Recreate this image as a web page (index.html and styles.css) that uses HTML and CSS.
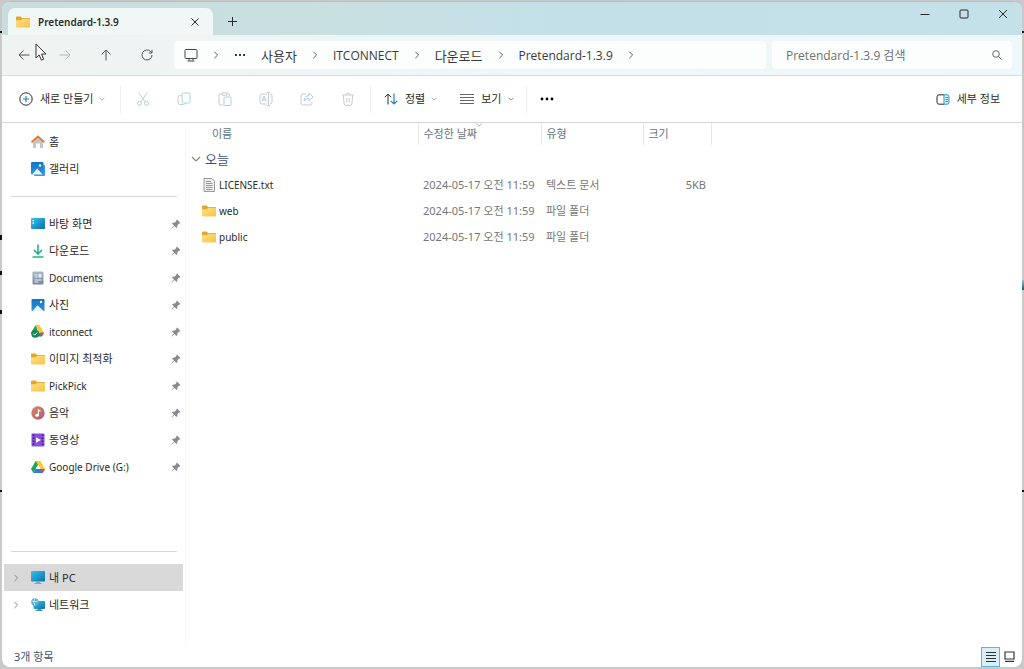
FILE: index.html
```html
<!DOCTYPE html>
<html lang="ko">
<head>
<meta charset="utf-8">
<meta name="viewport" content="width=device-width, initial-scale=1">
<title>Pretendard-1.3.9</title>
<link rel="stylesheet" href="styles.css">
</head>
<body class="desktop">
<svg class="defs" width="0" height="0" aria-hidden="true">
  <defs>
    <linearGradient id="gFolder" x1="0" y1="0" x2="1" y2="1"><stop offset="0" stop-color="#ffe08a"/><stop offset="1" stop-color="#f7c443"/></linearGradient>
    <linearGradient id="gBlue" x1="0" y1="0" x2="1" y2="1"><stop offset="0" stop-color="#37c4e8"/><stop offset="1" stop-color="#0a6fae"/></linearGradient>
    <linearGradient id="gPhoto" x1="0" y1="0" x2="0" y2="1"><stop offset="0" stop-color="#1273c6"/><stop offset="1" stop-color="#2e93dd"/></linearGradient>
    <linearGradient id="gDoc" x1="0" y1="0" x2="0" y2="1"><stop offset="0" stop-color="#a9bacb"/><stop offset="1" stop-color="#71879f"/></linearGradient>
    <linearGradient id="gMusic" x1="0" y1="0" x2="1" y2="1"><stop offset="0" stop-color="#e08460"/><stop offset="1" stop-color="#a9607f"/></linearGradient>
    <symbol id="folder" viewBox="0 0 14 12"><path d="M0 1.5Q0 .5 1 .5h3.6l1.5 1.6H13q1 0 1 1V6H0z" fill="#e2a62c"/><path d="M0 4.2h4.8l1.4-1.4H13q1 0 1 1v6.8q0 1-1 1H1q-1 0-1-1z" fill="url(#gFolder)"/></symbol>
    <symbol id="chev" viewBox="0 0 6 10"><path d="M1 1l4 4-4 4" fill="none" stroke="currentColor" stroke-width="1.2"/></symbol>
    <symbol id="down" viewBox="0 0 10 6"><path d="M1 1l4 4 4-4" fill="none" stroke="currentColor" stroke-width="1.2"/></symbol>
    <symbol id="pin" viewBox="0 0 10 10"><path d="M6 .6L9.400 4l-.8.7-.6-.1-1.600 1.700-.1 2-.8.7-2-2L.8 9.600l-.5-.4L3 6.400l-2-2 .8-.7 2-.1L5.400 2l-.1-.7z" fill="#858b91"/></symbol>
    <symbol id="drive" viewBox="0 0 14 12"><path d="M4.700 0h4.600L4.700 8 2.400 12 0 8z" fill="#1ea362"/><path d="M4.700 0h4.600L14 8H9.300z" fill="#ffc928"/><path d="M4.700 8H14l-2.400 4H2.400z" fill="#3478e5"/><path d="M9.300 8H14l-2.400 4z" fill="#e84436"/><path d="M7 4l2.400 4H4.700z" fill="#fff"/></symbol>
  </defs>
</svg>

<i class="speck speck-l speck-1"></i><i class="speck speck-l speck-2"></i><i class="speck speck-l speck-3"></i><i class="speck speck-l speck-4"></i><i class="speck speck-l speck-5"></i>
<i class="speck speck-r speck-1"></i><i class="speck speck-r speck-5"></i><i class="speck speck-r speck-teal"></i>

<div class="window">
  <header class="titlebar">
    <div class="tab">
      <svg width="14" height="12"><use href="#folder"/></svg>
      <span class="tab-title">Pretendard-1.3.9</span>
      <button class="icon-btn" aria-label="탭 닫기"><svg width="8" height="8" viewBox="0 0 8 8"><path d="M.5.5l7 7m0-7l-7 7" class="ln"/></svg></button>
    </div>
    <button class="icon-btn new-tab" aria-label="새 탭"><svg width="9" height="9" viewBox="0 0 9 9"><path d="M4.500 0v9M0 4.500h9" class="ln"/></svg></button>
    <div class="win-controls">
      <button class="icon-btn" aria-label="최소화"><svg width="10" height="10" viewBox="0 0 10 10"><path d="M.5 5.500h9" class="ln"/></svg></button>
      <button class="icon-btn" aria-label="최대화"><svg width="10" height="10" viewBox="0 0 10 10"><rect x="1" y="1" width="8" height="8" rx="1" class="ln"/></svg></button>
      <button class="icon-btn" aria-label="닫기"><svg width="10" height="10" viewBox="0 0 10 10"><path d="M1 1l8 8m0-8l-8 8" class="ln"/></svg></button>
    </div>
  </header>

  <nav class="navbar" aria-label="탐색">
    <div class="nav-buttons">
      <button class="icon-btn" aria-label="뒤로"><svg width="12" height="12" viewBox="0 0 12 12"><path d="M11.500 6H1m4.500-4.500L1 6l4.500 4.500" class="ln"/></svg></button>
      <button class="icon-btn faded" aria-label="앞으로"><svg width="12" height="12" viewBox="0 0 12 12"><path d="M.5 6H11M6.500 1.500L11 6l-4.500 4.500" class="ln"/></svg></button>
      <button class="icon-btn" aria-label="위로"><svg width="12" height="12" viewBox="0 0 12 12"><path d="M6 11.500V1M1.500 5.500L6 1l4.500 4.500" class="ln"/></svg></button>
      <button class="icon-btn" aria-label="새로 고침"><svg width="12" height="12" viewBox="0 0 12 12"><path d="M11 6a5 5 0 1 1-1.500-3.600L11 4M11 .8V4H7.800" class="ln"/></svg></button>
    </div>
    <div class="address">
      <svg class="pc-line" width="14" height="14" viewBox="0 0 14 14"><path d="M2 1.500h10q1 0 1 1v7q0 1-1 1H2q-1 0-1-1v-7q0-1 1-1zM5 10.500v2m4-2v2M3.500 13h7" class="ln"/></svg>
      <svg class="sep" width="6" height="10"><use href="#chev"/></svg>
      <button class="icon-btn dots" aria-label="이전 폴더"><svg width="10" height="2" viewBox="0 0 10 2"><path d="M0 0h2v2H0zm4 0h2v2H4zm4 0h2v2H8z" fill="currentColor"/></svg></button>
      <a href="#">사용자</a>
      <svg class="sep" width="6" height="10"><use href="#chev"/></svg>
      <a class="latin" href="#">ITCONNECT</a>
      <svg class="sep" width="6" height="10"><use href="#chev"/></svg>
      <a href="#">다운로드</a>
      <svg class="sep" width="6" height="10"><use href="#chev"/></svg>
      <a class="latin" href="#">Pretendard-1.3.9</a>
      <svg class="sep" width="6" height="10"><use href="#chev"/></svg>
    </div>
    <label class="search">
      <input type="text" placeholder="Pretendard-1.3.9 검색" aria-label="Pretendard-1.3.9 검색">
      <svg width="10" height="10" viewBox="0 0 10 10"><circle cx="4" cy="4" r="3.300" class="ln"/><path d="M6.400 6.400L9.700 9.700" class="ln"/></svg>
    </label>
  </nav>

  <div class="toolbar">
    <button class="tool create"><svg width="14" height="14" viewBox="0 0 14 14"><circle cx="7" cy="7" r="6.200" class="ln"/><path d="M7 4v6M4 7h6" fill="none" stroke="#1b85c4" stroke-width="1.200"/></svg><span>새로 만들기</span><svg class="drop" width="6" height="4"><use href="#down"/></svg></button>
    <div class="edit-tools">
      <button class="icon-btn" aria-label="잘라내기"><svg width="14" height="14" viewBox="0 0 14 14"><path d="M2.500.5l6.700 9.200M11.500.5L4.800 9.700" class="ln-g"/><circle cx="3.500" cy="11.300" r="2" class="ln-b"/><circle cx="10.500" cy="11.300" r="2" class="ln-b"/></svg></button>
      <button class="icon-btn" aria-label="복사"><svg width="14" height="14" viewBox="0 0 14 14"><path d="M4.500 3.500H3q-2 0-2 2v5q0 2 2 2h3.500q1.500 0 2-1.500" class="ln-g"/><rect x="5" y="1" width="8" height="10" rx="1.500" class="ln-b"/></svg></button>
      <button class="icon-btn" aria-label="붙여넣기"><svg width="14" height="14" viewBox="0 0 14 14"><path d="M5.500 13H2q-1 0-1-1V3q0-1 1-1h2m5 0h1.500q1 0 1 1v1M4 .8h5v2.400H4z" class="ln-g"/><rect x="6" y="5" width="7" height="8.500" rx="1" class="ln-b"/></svg></button>
      <button class="icon-btn" aria-label="이름 바꾸기"><svg width="14" height="14" viewBox="0 0 14 14"><path d="M8 2H3Q1 2 1 4v6q0 2 2 2h5m3-10q2 0 2 2v6q0 2-2 2M9.500.5v13m-1.500-13h3m-3 13h3" class="ln-g"/><path d="M3 9.500L5.200 4l2.200 5.500M3.800 7.800h2.800" class="ln-b"/></svg></button>
      <button class="icon-btn" aria-label="공유"><svg width="14" height="14" viewBox="0 0 14 14"><path d="M6 2H3Q1 2 1 4v7q0 2 2 2h7q2 0 2-2v-1" class="ln-g"/><path d="M9 1l4 4-4 3.700V6.500Q6 6.400 4 9q.4-5 5-5.500z" class="ln-b"/></svg></button>
      <button class="icon-btn" aria-label="삭제"><svg width="14" height="14" viewBox="0 0 14 14"><path d="M1 3h12M5 3q0-2 2-2t2 2M2.200 3l1 9q.1 1.300 1.300 1.300h5q1.200 0 1.300-1.300l1-9M5.800 6v4.500M8.200 6v4.500" class="ln-g"/></svg></button>
    </div>
    <button class="tool sort"><svg width="14" height="12" viewBox="0 0 14 12"><path d="M4 11.500V1M.8 4.200L4 1l3.200 3.200" class="ln"/><path d="M10 .5V11M6.800 7.800L10 11l3.200-3.200" fill="none" stroke="#1b85c4" stroke-width="1.200"/></svg><span>정렬</span><svg class="drop" width="6" height="4"><use href="#down"/></svg></button>
    <button class="tool view"><svg width="14" height="10" viewBox="0 0 14 10"><path d="M0 .5h14M0 3.500h14M0 6.500h14M0 9.500h14" class="ln"/></svg><span>보기</span><svg class="drop" width="6" height="4"><use href="#down"/></svg></button>
    <button class="tool more" aria-label="더 보기"><svg width="14" height="4" viewBox="0 0 14 4"><circle cx="2" cy="2" r="1.400"/><circle cx="7" cy="2" r="1.400"/><circle cx="12" cy="2" r="1.400"/></svg></button>
    <button class="tool details"><svg width="14" height="11" viewBox="0 0 14 11"><path d="M8 .8H3q-2 0-2 2v5.400q0 2 2 2h5" class="ln"/><path d="M8 .8h3q2 0 2 2v5.400q0 2-2 2H8zM9.500 3.500H12m-2.500 2H12m-2.500 2H12" fill="#dff3fd" stroke="#1b95d0"/></svg><span>세부 정보</span></button>
  </div>

  <div class="body">
    <aside class="sidebar">
      <ul class="group top">
        <li><a class="item" href="#"><svg width="14" height="14" viewBox="0 0 14 14"><path d="M2 6.500L7 2l5 4.500V13H9V8.500H5V13H2z" fill="#c3c5c7"/><path d="M.6 7.300L7 1.500l6.400 5.800" fill="none" stroke="#d98236" stroke-width="1.900"/></svg><span>홈</span></a></li>
        <li><a class="item" href="#"><svg width="14" height="14" viewBox="0 0 14 14"><path d="M3 3h10q1 0 1 1v9q0 1-1 1H4q-1 0-1-1z" fill="#3a9ae0"/><rect width="12.500" height="12.500" rx="1.200" fill="url(#gPhoto)"/><path d="M1 12.500l5.200-6 5.400 6z" fill="#e7f5ff"/><circle cx="9" cy="3.500" r="1.200" fill="#fff"/></svg><span>갤러리</span></a></li>
      </ul>
      <ul class="group pinned">
        <li><a class="item" href="#"><svg width="14" height="11" viewBox="0 0 14 11"><rect width="14" height="11" rx="1" fill="url(#gBlue)"/><path d="M1.500 2h1.500v1.200H1.500zm0 2.500h1.500v1.200H1.500z" fill="#fff"/></svg><span>바탕 화면</span><svg class="pin" width="10" height="10"><use href="#pin"/></svg></a></li>
        <li><a class="item" href="#"><svg width="14" height="14" viewBox="0 0 14 14"><path d="M7 .5v9M3 6l4 4 4-4M1.500 13h11" fill="none" stroke="#27b08c" stroke-width="1.600"/></svg><span>다운로드</span><svg class="pin" width="10" height="10"><use href="#pin"/></svg></a></li>
        <li><a class="item" href="#"><svg width="14" height="14" viewBox="0 0 14 14"><rect x="1.500" y=".5" width="11" height="13" rx="1" fill="url(#gDoc)"/><path d="M3.500 4h3m-3 2h3m-3 3h7M3.500 11h4" stroke="#e6edf4"/><path d="M7.500 3h3v3.500h-3z" fill="#e6edf4"/></svg><span class="latin">Documents</span><svg class="pin" width="10" height="10"><use href="#pin"/></svg></a></li>
        <li><a class="item" href="#"><svg width="14" height="12" viewBox="0 0 14 12"><rect x=".5" width="13" height="12" rx="1" fill="url(#gPhoto)"/><path d="M1.500 12l5-5.800 6 5.800z" fill="#e7f5ff"/><circle cx="10" cy="3" r="1.200" fill="#fff"/></svg><span>사진</span><svg class="pin" width="10" height="10"><use href="#pin"/></svg></a></li>
        <li><a class="item" href="#"><svg width="14" height="13" viewBox="0 0 14 13"><use href="#drive" width="13" height="12"/><circle cx="4.300" cy="8.700" r="4" fill="#16884f"/><path d="M2.300 8.700l1.400 1.500 2.600-2.800" fill="none" stroke="#fff"/></svg><span class="latin">itconnect</span><svg class="pin" width="10" height="10"><use href="#pin"/></svg></a></li>
        <li><a class="item" href="#"><svg width="14" height="12"><use href="#folder"/></svg><span>이미지 최적화</span><svg class="pin" width="10" height="10"><use href="#pin"/></svg></a></li>
        <li><a class="item" href="#"><svg width="14" height="12"><use href="#folder"/></svg><span class="latin">PickPick</span><svg class="pin" width="10" height="10"><use href="#pin"/></svg></a></li>
        <li><a class="item" href="#"><svg width="14" height="14" viewBox="0 0 14 14"><circle cx="7" cy="7" r="6.700" fill="url(#gMusic)"/><ellipse cx="6" cy="9.300" rx="1.800" ry="1.500" fill="#fff"/><path d="M7.300 9.300V3.500q.5 1.300 2.300 1.500" fill="none" stroke="#fff" stroke-width="1.100"/></svg><span>음악</span><svg class="pin" width="10" height="10"><use href="#pin"/></svg></a></li>
        <li><a class="item" href="#"><svg width="14" height="14" viewBox="0 0 14 14"><rect x=".5" y=".5" width="13" height="13" rx="1" fill="#8a4fd8"/><path d="M2.500 1.500v11m9-11v11" stroke="#40208a" stroke-width="1.600" stroke-dasharray="1.600 1.400"/><path d="M5 4.300l4.800 2.700L5 9.700z" fill="#fff"/></svg><span>동영상</span><svg class="pin" width="10" height="10"><use href="#pin"/></svg></a></li>
        <li><a class="item" href="#"><svg width="14" height="12"><use href="#drive"/></svg><span class="latin">Google Drive (G:)</span><svg class="pin" width="10" height="10"><use href="#pin"/></svg></a></li>
      </ul>
      <ul class="group tree">
        <li><a class="item selected" href="#"><svg class="expand" width="6" height="10"><use href="#chev"/></svg><svg width="14" height="13" viewBox="0 0 14 13"><rect width="14" height="10.500" rx="1" fill="url(#gBlue)"/><path d="M5 10.500h4v1.500H5zM3.500 12h7v1h-7z" fill="#88a3b1"/></svg><span>내 PC</span></a></li>
        <li><a class="item" href="#"><svg class="expand" width="6" height="10"><use href="#chev"/></svg><svg width="14" height="13" viewBox="0 0 14 13"><rect x="2.500" y="3" width="11.500" height="8" rx="1" fill="url(#gBlue)"/><path d="M6.500 11h3.500v1.200H6.500zM4.500 12h7v1h-7z" fill="#4b8fad"/><circle cx="4" cy="4" r="3.800" fill="#5aaed6"/><path d="M1 3q3 1.500 6 0M4 .2q-2.500 4 0 7.500" fill="none" stroke="#d7eefa" stroke-width=".8"/></svg><span>네트워크</span></a></li>
      </ul>
    </aside>

    <main class="files">
      <table class="file-table">
        <colgroup><col class="col-name"><col class="col-date"><col class="col-type"><col class="col-size"></colgroup>
        <thead><tr><th class="name-head">이름</th><th class="sorted">수정한 날짜<svg class="sort-mark" width="6" height="4"><use href="#down"/></svg></th><th>유형</th><th>크기</th></tr></thead>
        <tbody>
          <tr class="group-row"><th colspan="4"><button class="group-btn"><svg width="10" height="6"><use href="#down"/></svg>오늘</button></th></tr>
          <tr><td><a class="file" href="#"><svg width="14" height="14" viewBox="0 0 14 14"><path d="M2 .5h8l2.500 2.500v10.500H2z" fill="#eceded" stroke="#9a9a9a"/><path d="M4 3.500h5M4 5.500h6.500M4 7.500h6.500M4 9.500h6.500M4 11.500h6.500" stroke="#9a9a9a"/></svg><span class="latin">LICENSE.txt</span></a></td><td>2024-05-17 오전 11:59</td><td>텍스트 문서</td><td class="num">5KB</td></tr>
          <tr><td><a class="file" href="#"><svg width="14" height="12"><use href="#folder"/></svg><span class="latin">web</span></a></td><td>2024-05-17 오전 11:59</td><td>파일 폴더</td><td></td></tr>
          <tr><td><a class="file" href="#"><svg width="14" height="12"><use href="#folder"/></svg><span class="latin">public</span></a></td><td>2024-05-17 오전 11:59</td><td>파일 폴더</td><td></td></tr>
        </tbody>
      </table>
    </main>
  </div>

  <footer class="status">
    <span>3개 항목</span>
    <div class="view-modes">
      <button class="icon-btn active" aria-label="자세히"><svg width="10" height="10" viewBox="0 0 10 10"><path d="M0 .5h10M0 3.500h10M0 6.500h10M0 9.500h10" stroke="#333"/></svg></button>
      <button class="icon-btn" aria-label="큰 아이콘"><svg width="11" height="11" viewBox="0 0 11 11"><path d="M1 1h9v7H1zM1 10.300h9" fill="none" stroke="#333" stroke-width="1.200"/></svg></button>
    </div>
  </footer>
</div>

<svg class="pointer" width="12" height="19" viewBox="0 0 12 19" aria-hidden="true"><path d="M1 1v14l3.200-3 2.200 5.200 2.300-1L6.500 11H11z" fill="#fff" stroke="#333"/></svg>
</body>
</html>
```
FILE: styles.css
```css
* { box-sizing: border-box; }

body {
  margin: 0;
  font-family: "Noto Sans", "Noto Sans CJK KR", sans-serif;
  font-size: 11px;
  line-height: 16px;
  color: #2b2b2b;
}

button, input { font: inherit; color: inherit; }
button { background: none; border: 0; padding: 0; }
a { color: inherit; text-decoration: none; }
ul { list-style: none; margin: 0; padding: 0; }
svg { display: block; flex: none; }

.defs { position: absolute; }

.desktop {
  min-height: 100vh;
  padding: 1px 2px 2px;
  background: #c9c9c9;
  display: flex;
}

.window {
  flex: 1;
  min-width: 0;
  display: flex;
  flex-direction: column;
  background: #fff;
  border-top: 1px solid #b5bfc1;
  border-radius: 8px;
  overflow: hidden;
}

.ln { fill: none; stroke: currentColor; stroke-width: 1; }
.ln-g { fill: none; stroke: #c6cccf; }
.ln-b { fill: none; stroke: #a9d0e3; }

.icon-btn { display: flex; align-items: center; justify-content: center; }

/* Title bar */
.titlebar {
  display: flex;
  height: 33px;
  background: linear-gradient(90deg, #c8dedd, #cae0e0 30%, #c3e0e9 55%, #c4e0e9);
}

.tab {
  display: flex;
  align-items: center;
  width: 205px;
  margin: 6px 0 0 6px;
  padding: 0 14px 0 8px;
  background: #f1f7f6;
  border-radius: 7px 7px 0 0;
}
.tab-title { margin-left: 8px; font-weight: 600; font-size: 10px; }
.tab .icon-btn { margin-left: auto; }
.new-tab { width: 39px; padding-top: 6px; }
.win-controls { display: flex; margin-left: auto; height: 24px; }
.win-controls .icon-btn { width: 39px; }

/* Navigation */
.navbar {
  display: flex;
  align-items: center;
  height: 41px;
  padding-right: 10px;
  background: linear-gradient(90deg, #eff3f2, #eef6f7 50%, #eef7fa);
  border-bottom: 1px solid #d6dddf;
}
.nav-buttons { display: flex; gap: 29px; padding: 0 21px 0 16px; color: #555; }
.nav-buttons .icon-btn { width: 12px; }
.nav-buttons .faded { color: #b5b9ba; }

.address, .search {
  display: flex;
  align-items: center;
  height: 28px;
  background: #fcfefe;
  border-radius: 4px;
  font-family: "Open Sans", "Noto Sans CJK KR", sans-serif;
}
.address { flex: 1; min-width: 0; padding-left: 10px; font-size: 13px; white-space: nowrap; color: #3a3a3a; }
.address a { padding-top: 1px; }
.address .latin { font-size: 12px; }
.address .sep { width: 6px; height: 8px; margin: 0 15px; color: #555; }
.address .pc-line { color: #444; }
.address .dots { margin: 0 16px 0 1px; }
.search { width: 240px; margin-left: 6px; padding: 0 10px 0 14px; font-size: 12px; color: #666; }
.search input { flex: 1; min-width: 0; padding: 1px 0 0; border: 0; outline: 0; background: none; }
.search input::placeholder { color: #707070; opacity: 1; }

/* Command bar */
.toolbar {
  display: flex;
  align-items: center;
  height: 47px;
  border-bottom: 1px solid #cfd8d8;
}
.tool { display: flex; align-items: center; height: 28px; white-space: nowrap; }
.tool span { margin-left: 7px; }
.drop { margin-left: 6px; color: #888; }
.create { width: 119px; padding-left: 17px; border-right: 1px solid #edf0f0; }
.edit-tools { display: flex; gap: 27px; align-items: center; height: 28px; padding: 0 15px; border-right: 1px solid #edf0f0; }
.sort { padding-left: 13px; }
.view { padding: 0 12px 0 23px; border-right: 1px solid #edf0f0; }
.view svg { color: #666; }
.more { padding-left: 13px; }
.details { margin-left: auto; padding-right: 22px; }

/* Content */
.body { flex: 1; display: flex; }

.sidebar {
  display: flex;
  flex-direction: column;
  width: 184px;
  padding: 5px 0 28px;
  border-right: 1px solid #f6f8f8;
}
.item {
  display: flex;
  align-items: center;
  gap: 4px;
  height: 27px;
  margin: 0 2px;
  padding: 0 2px 0 27px;
  white-space: nowrap;
}
.item .latin, .file .latin { font-size: 10px; }
.item .pin { margin: 0 0 0 auto; }
.group.pinned, .group.tree { position: relative; padding-top: 14px; }
.group.pinned { margin-top: 14px; }
.group.tree { margin-top: auto; padding-top: 13px; }
.group.pinned::before, .group.tree::before {
  content: "";
  position: absolute;
  top: 0;
  left: 9px;
  right: 8px;
  border-top: 1px solid #d6d6d6;
}
.tree .item { padding-left: 9px; }
.tree .expand { margin-right: 8px; width: 6px; height: 8px; color: #888; }
.selected { background: #d9d9d9; }

.file-table {
  table-layout: fixed;
  width: 525px;
  border-collapse: collapse;
  color: #777;
  white-space: nowrap;
}
.col-name { width: 232px; }
.col-date { width: 123px; }
.col-type { width: 102px; }
.col-size { width: 68px; }
.file-table th, .file-table td { height: 26px; padding: 0 0 0 5px; text-align: left; font-weight: 400; }
.file-table thead th { position: relative; height: 22px; padding-left: 5px; color: #65727e; border-right: 1px solid #e3e8e8; }
.file-table thead .name-head { padding-left: 26px; }
.sort-mark { position: absolute; top: 0; left: 47%; color: #888; }
.file-table .group-row th { height: 27px; padding: 0 0 0 5px; }
.group-btn { display: flex; align-items: center; gap: 4px; font-size: 13px; color: #3f4f83; }
.group-btn svg { color: #888; }
.file-table .num { padding: 0 5px 0 0; text-align: right; }
.file {
  display: flex;
  align-items: center;
  gap: 3px;
  padding-left: 11px;
  color: #2b2b2b;
}

/* Status bar */
.status {
  display: flex;
  align-items: center;
  justify-content: space-between;
  height: 21px;
  padding: 0 3px 0 12px;
  color: #41566d;
}
.view-modes { display: flex; }
.view-modes .icon-btn { width: 19px; height: 20px; }
.view-modes .active { background: #d8effa; border: 1px solid #62b4d4; }

/* Desktop behind the window, and the mouse pointer */
.speck { position: absolute; width: 2px; height: 4px; background: #111; }
.speck-l { left: 0; }
.speck-r { right: 0; }
.speck-1 { top: 31px; height: 2px; }
.speck-2 { top: 235px; height: 5px; }
.speck-3 { top: 271px; }
.speck-4 { top: 310px; }
.speck-5 { top: 490px; height: 2px; }
.speck-teal { top: 280px; height: 10px; background: linear-gradient(#8fc3cd, #1b5a72); }
.pointer { position: absolute; left: 35px; top: 43px; }
```
